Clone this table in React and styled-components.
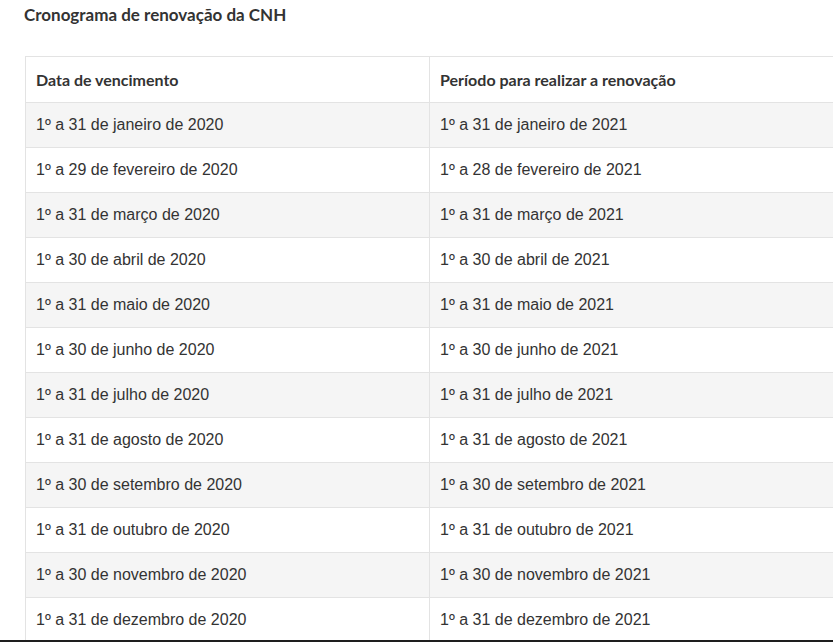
import React from "react";
import styled, { createGlobalStyle } from "styled-components";

const Global = createGlobalStyle`
  html, body { margin: 0; padding: 0; background: #fff; }
  body { overflow: hidden; width: 833px; height: 642px; }
`;

const Page = styled.div`
  padding: 3px 0 0 24px;
  width: 833px;
  height: 642px;
  box-sizing: border-box;
  overflow: hidden;
`;

const Title = styled.h3`
  margin: 0 0 29px 0;
  font-family: Lato, "Liberation Sans", sans-serif;
  font-weight: 700;
  font-size: 17px;
  line-height: 24px;
  color: #333;
`;

const Table = styled.table`
  border-collapse: collapse;
  width: 820px;
  margin-left: 1px;
  table-layout: fixed;
`;

const Col = styled.col`
  width: ${(p) => p.$w}px;
`;

const Row = styled.tr`
  background: ${(p) => (p.$shade ? "#f5f5f5" : "#fff")};
`;

const Th = styled.th`
  border: 1px solid #e3e3e3;
  text-align: left;
  padding: 0 10px;
  height: 46px;
  box-sizing: border-box;
  font-family: Lato, "Liberation Sans", sans-serif;
  font-weight: 700;
  font-size: 16px;
  color: #333;
`;

const Td = styled.td`
  border: 1px solid #e3e3e3;
  padding: 0 10px;
  height: 45px;
  box-sizing: border-box;
  font-family: "Liberation Sans", Arial, sans-serif;
  font-size: 16px;
  color: #333;
  white-space: nowrap;
`;

const BottomEdge = styled.div`
  position: fixed;
  left: 0;
  right: 0;
  bottom: 0;
  height: 2px;
  background: #1e1e1e;
`;

const months = [
  ["31", "janeiro", "31"],
  ["29", "fevereiro", "28"],
  ["31", "março", "31"],
  ["30", "abril", "30"],
  ["31", "maio", "31"],
  ["30", "junho", "30"],
  ["31", "julho", "31"],
  ["31", "agosto", "31"],
  ["30", "setembro", "30"],
  ["31", "outubro", "31"],
  ["30", "novembro", "30"],
  ["31", "dezembro", "31"],
];

export default function App() {
  return (
    <>
      <Global />
      <Page>
        <Title>Cronograma de renovação da CNH</Title>
        <Table>
          <colgroup>
            <Col $w={404} />
            <Col $w={416} />
          </colgroup>
          <thead>
            <Row>
              <Th>Data de vencimento</Th>
              <Th>Período para realizar a renovação</Th>
            </Row>
          </thead>
          <tbody>
            {months.map(([d1, m, d2], i) => (
              <Row key={m} $shade={i % 2 === 0}>
                <Td>1º a {d1} de {m} de 2020</Td>
                <Td>1º a {d2} de {m} de 2021</Td>
              </Row>
            ))}
          </tbody>
        </Table>
      </Page>
      <BottomEdge />
    </>
  );
}
